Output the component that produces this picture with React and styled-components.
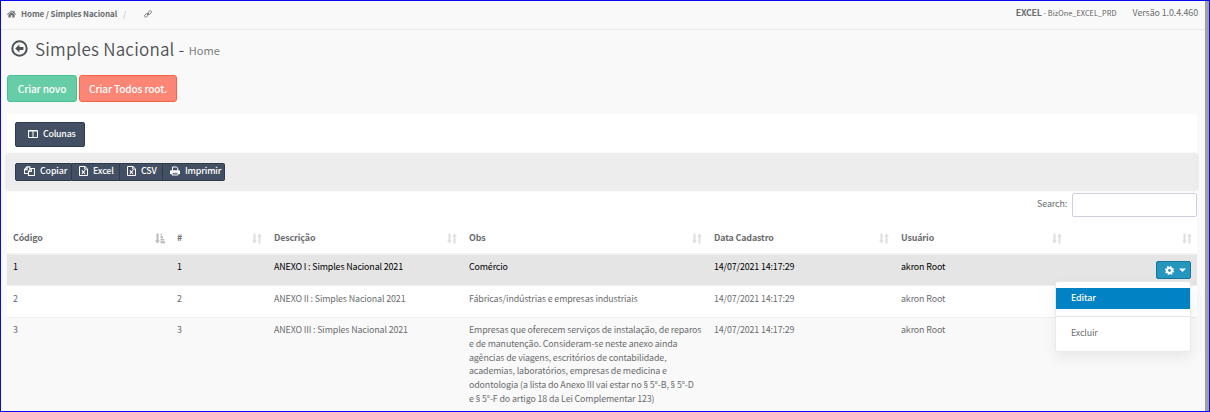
import React from 'react';
import styled, { createGlobalStyle } from 'styled-components';

const GlobalStyle = createGlobalStyle`
  * { box-sizing: border-box; }
  body {
    margin: 0;
    overflow: hidden;
    font-family: "Noto Sans CJK SC", "Noto Sans", sans-serif;
    font-size: 8.9px;
    letter-spacing: -0.13px;
    line-height: 13.75px;
    color: #6a6c6f;
  }
`;

const Page = styled.div`
  width: 1210px;
  height: 412px;
  overflow: hidden;
  border: 1px solid #0a0af0;
  background: #f9f9f9;
  display: flex;
`;
const Main = styled.div`
  flex: 1;
  min-width: 0;
  display: flex;
  flex-direction: column;
`;
const Scrollbar = styled.div`
  width: 4px;
  background: #a0a0a0;
`;
const TopBar = styled.header`
  height: 29px;
  flex: none;
  border-bottom: 1px solid #ececec;
  display: flex;
  justify-content: space-between;
  padding: 6px 7px 0 6px;
`;
const Crumbs = styled.nav`
  display: flex;
  align-items: center;
  height: 14px;
  font-size: 8px;
  letter-spacing: -0.09px;
  svg:first-child { margin-right: 5px; }
  svg:last-child { margin-left: 18px; }
`;
const Slash = styled.span`
  color: #b5b5b5;
  margin-left: 6px;
`;
const Status = styled.div`
  display: flex;
  height: 14px;
  margin-top: -1px;
  letter-spacing: -0.08px;
  white-space: nowrap;
  b { letter-spacing: -0.25px; }
  small { font-size: 7.3px; letter-spacing: 0.05px; color: #5c5e61; }
`;
const Version = styled.span`
  margin-left: 16px;
`;
const Heading = styled.h1`
  margin: 0;
  height: 45px;
  flex: none;
  display: flex;
  padding: 9px 0 0 10px;
  font-size: 17px;
  font-weight: 350;
  line-height: 20px;
  letter-spacing: 0.22px;
  white-space: nowrap;
  color: #4f5254;
  svg { margin: 1px 7px 0 0; }
  small {
    font-size: 11px;
    font-weight: 400;
    letter-spacing: 0.05px;
    color: #7b7d80;
    margin-left: 4px;
    padding-top: 1px;
  }
`;
const Actions = styled.div`
  display: flex;
  gap: 2px;
  padding-left: 6px;
  margin-bottom: 12px;
`;
const ActionButton = styled.button`
  height: 27px;
  width: ${(p) => p.$w}px;
  padding: 1px 0 0;
  border: 1px solid ${(p) => p.$border};
  border-radius: 3px;
  background: ${(p) => p.$bg};
  color: #fff;
  font: 500 10.1px/14px "Noto Sans CJK SC", sans-serif;
  letter-spacing: -0.14px;
  white-space: nowrap;
`;
const Panel = styled.section`
  width: 1190px;
  margin-left: 6px;
  background: #fff;
  flex: 1;
  padding-top: 8px;
`;
const DarkButton = styled.button`
  height: ${(p) => p.$h}px;
  width: ${(p) => p.$w}px;
  padding: 0 3px 3px 8px;
  border: 1px solid #2f3b4c;
  border-radius: ${(p) => p.$radius || '2px'};
  background: #435063;
  color: #fff;
  display: flex;
  align-items: center;
  font: 500 8.9px/12px "Noto Sans CJK SC", sans-serif;
  letter-spacing: -0.15px;
  white-space: nowrap;
  svg { margin-right: 5px; flex: none; }
  & + & { border-left: 0; padding-left: 7px; }
`;
const ColumnsRow = styled.div`
  padding-left: 8px;
  height: 32px;
  button { padding-left: 12px; padding-bottom: 1px; letter-spacing: -0.25px; }
`;
const ExportBar = styled.div`
  height: 36px;
  background: #ededed;
  box-shadow: 0 0 3px rgba(0, 0, 0, 0.18);
  display: flex;
  padding: 9px 0 0 8px;
`;
const SearchRow = styled.label`
  display: flex;
  justify-content: flex-end;
  height: 27px;
  margin-top: 3px;
  line-height: 21px;
`;
const SearchInput = styled.input`
  width: 125px;
  height: 24px;
  margin-left: 5px;
  border: 1px solid #ccd0e0;
  border-radius: 2px;
  background: #fff;
`;
const Row = styled.div`
  display: grid;
  grid-template-columns: 163px 97px 195px 245px 187px 173px 130px;
  height: ${(p) => p.$h}px;
  padding-top: ${(p) => p.$pt}px;
  background: ${(p) => p.$bg || '#fff'};
  color: ${(p) => p.$color || 'inherit'};
  border-top: ${(p) => (p.$line ? '1px solid #efefef' : '0')};
`;
const HeadRow = styled(Row)`
  border-bottom: 2px solid #f1f1f1;
  font-weight: 700;
  color: #6a6c6f;
`;
const Cell = styled.div`
  padding-left: 7px;
  white-space: pre;
  position: relative;
  &:first-child { padding-left: 6px; }
`;
const HeadCell = styled(Cell)`
  display: flex;
  justify-content: space-between;
  padding-right: 5px;
  svg { display: block; margin-top: 2px; }
`;
const ObsLine = styled.div`
  height: 13.75px;
`;
const Section = styled.span`
  font-family: "Noto Sans", sans-serif;
`;
const GearButton = styled.button`
  width: 35px;
  height: 18px;
  margin: 1px 0 0 82px;
  padding: 0 4px 0 8px;
  border: 1px solid #17779a;
  border-radius: 2px;
  background: #2596be;
  display: flex;
  align-items: center;
  justify-content: space-between;
`;
const Menu = styled.div`
  position: absolute;
  z-index: 2;
  top: 21px;
  left: -12px;
  width: 136px;
  height: 71px;
  background: #fff;
  border: 1px solid #e9e9e9;
  border-radius: 3px;
  box-shadow: 0 6px 14px rgba(0, 0, 0, 0.07);
  padding-top: 6px;
`;
const MenuItem = styled.div`
  height: 21px;
  padding: 3px 0 0 15px;
  color: ${(p) => (p.$active ? '#fff' : '#6a6c6f')};
  background: ${(p) => (p.$active ? '#0082c4' : 'transparent')};
  font-weight: ${(p) => (p.$active ? 500 : 400)};
`;
const Divider = styled.div`
  height: 1px;
  background: #e6e6e6;
  margin: 7px 0 6px;
`;

const HomeIcon = () => (
  <svg width="9" height="8" viewBox="0 0 18 16" fill="#6a6c6f">
    <path d="M9 1 0 8.6l1 1.2L9 3.2l8 6.6 1-1.2-2.8-2.4V1.6h-2.4v2.6zM9 4.5 2.9 9.6V15h4.6v-4.4h3V15h4.6V9.6z" />
  </svg>
);
const LinkIcon = () => (
  <svg width="8" height="8" viewBox="0 0 16 16" fill="none" stroke="#6a6c6f" strokeWidth="1.6">
    <rect x="7.3" y="2.8" width="8" height="5" rx="2.3" transform="rotate(-42 11.3 5.3)" />
    <rect x="0.8" y="8.2" width="8" height="5" rx="2.3" transform="rotate(-42 4.8 10.7)" />
    <path d="m6 10 4-4" />
  </svg>
);
const BackIcon = () => (
  <svg width="17" height="17" viewBox="0 0 17 17">
    <circle cx="8.5" cy="8.5" r="7.2" fill="none" stroke="#4f5254" strokeWidth="2" />
    <path d="M4.2 8.5 8.4 4.6v2.5h4v2.8h-4v2.5z" fill="#4f5254" />
  </svg>
);
const ColumnsIcon = () => (
  <svg width="10" height="8" viewBox="0 0 10 8" fill="none" stroke="#fff">
    <path d="M.5.5h9v7h-9zM5 .5v7M.5 1h9" />
  </svg>
);
const CopyIcon = () => (
  <svg width="11" height="10" viewBox="0 0 11 10" fill="none" stroke="#fff" strokeWidth="1.1">
    <path d="M4.5 7.5h-4v-4L3 .9h2.8v2M.5 3.6h2.6V.9M4.5 9.5V5.2L7 2.5h3.5v7zM4.7 5.4h2.6V2.6" />
  </svg>
);
const SheetIcon = () => (
  <svg width="9" height="10" viewBox="0 0 9 10" fill="none" stroke="#fff">
    <path d="M.5.5H6l2.5 2.4v6.6h-8zM5.7.7v2.5h2.6" />
    <path d="m2.8 4.3 3.2 3.5M6 4.3 2.8 7.8" strokeWidth="1.1" />
  </svg>
);
const PrintIcon = () => (
  <svg width="10" height="10" viewBox="0 0 10 10">
    <path d="M2.5 5V1h4l1.2 1.2V5" fill="none" stroke="#fff" />
    <path d="M1.2 4.3h7.6a1.2 1.2 0 0 1 1.2 1.2V8H8V6.6H2V8H0V5.5a1.2 1.2 0 0 1 1.2-1.2z" fill="#fff" />
    <path d="M2 6.8h6V9H2z" fill="none" stroke="#fff" />
  </svg>
);
const SortIcon = () => (
  <svg width="10" height="11" viewBox="0 0 10 11" fill="#dedede">
    <path d="M1.5.5h2v7H5L2.5 10.5 0 7.5h1.5zM6.5 10.5h2v-7H10L7.5.5 5 3.5h1.5z" />
  </svg>
);
const SortAscIcon = () => (
  <svg width="10" height="11" viewBox="0 0 10 11" fill="#b9b9b9">
    <path d="M1.5.5h2v7H5L2.5 10.5 0 7.5h1.5zM5.5.8h1.5v1.8H5.5zM5.5 3.3h2.5v1.8H5.5zM5.5 5.8H9v1.8H5.5zM5.5 8.3H10v1.9H5.5z" />
  </svg>
);
const GearIcon = () => (
  <svg width="9" height="9" viewBox="0 0 18 18">
    <circle cx="9" cy="9" r="5" fill="none" stroke="#fff" strokeWidth="4.4" />
    <circle cx="9" cy="9" r="7.5" fill="none" stroke="#fff" strokeWidth="3" strokeDasharray="3.3 2.59" />
  </svg>
);
const CaretIcon = () => (
  <svg width="7" height="4" viewBox="0 0 7 4" fill="#fff"><path d="M0 .5h7L3.5 4z" /></svg>
);

const columns = ['Código', '#', 'Descrição', 'Obs', 'Data Cadastro', 'Usuário', ''];
const obsLong = (
  <>
    <ObsLine>Empresas que oferecem serviços de instalação, de reparos</ObsLine>
    <ObsLine>e de manutenção. Consideram-se neste anexo ainda</ObsLine>
    <ObsLine>agências de viagens, escritórios de contabilidade,</ObsLine>
    <ObsLine>academias, laboratórios, empresas de medicina e</ObsLine>
    <ObsLine>
      odontologia (a lista do Anexo III vai estar no <Section>§</Section> 5°-B, <Section>§</Section> 5°-D
    </ObsLine>
    <ObsLine>
      e <Section>§</Section> 5°-F do artigo 18 da Lei Complementar 123)
    </ObsLine>
  </>
);
const rows = [
  { id: '1', name: 'ANEXO I : Simples Nacional 2021', obs: 'Comércio', h: 30, pt: 5, bg: '#e5e5e5', color: '#000', menu: true },
  { id: '2', name: 'ANEXO II : Simples Nacional 2021', obs: 'Fábricas/indústrias e empresas industriais', h: 32, pt: 6, line: true },
  { id: '3', name: 'ANEXO III : Simples Nacional 2021', obs: obsLong, h: 94, pt: 5, bg: '#f9f9f9', line: true },
];

export default function App() {
  return (
    <>
      <GlobalStyle />
      <Page>
        <Main>
          <TopBar>
            <Crumbs>
              <HomeIcon />
              <b>Home / Simples Nacional</b>
              <Slash>/</Slash>
              <LinkIcon />
            </Crumbs>
            <Status>
              <span><b>EXCEL</b> <small>- BizOne_EXCEL_PRD</small></span>
              <Version>Versão 1.0.4.460</Version>
            </Status>
          </TopBar>
          <Heading>
            <BackIcon />
            <span>Simples Nacional -</span>
            <small>Home</small>
          </Heading>
          <Actions>
            <ActionButton $w={70} $bg="#66cda6" $border="#45c090">Criar novo</ActionButton>
            <ActionButton $w={98} $bg="#fc8675" $border="#fb5f48">Criar Todos root.</ActionButton>
          </Actions>
          <Panel>
            <ColumnsRow>
              <DarkButton $w={70} $h={25}><ColumnsIcon />Colunas</DarkButton>
            </ColumnsRow>
            <ExportBar>
              <DarkButton $w={57} $h={18} $radius="2px 0 0 2px"><CopyIcon />Copiar</DarkButton>
              <DarkButton $w={48} $h={18} $radius="0"><SheetIcon />Excel</DarkButton>
              <DarkButton $w={43} $h={18} $radius="0"><SheetIcon />CSV</DarkButton>
              <DarkButton $w={62} $h={18} $radius="0 2px 2px 0"><PrintIcon />Imprimir</DarkButton>
            </ExportBar>
            <SearchRow>Search:<SearchInput /></SearchRow>
            <HeadRow $h={35} $pt={11}>
              {columns.map((c, i) => (
                <HeadCell key={i}><span>{c}</span>{i === 0 ? <SortAscIcon /> : <SortIcon />}</HeadCell>
              ))}
            </HeadRow>
            {rows.map((r) => (
              <Row key={r.id} $h={r.h} $pt={r.pt} $bg={r.bg} $color={r.color} $line={r.line}>
                <Cell>{r.id}</Cell>
                <Cell>{r.id}</Cell>
                <Cell>{r.name}</Cell>
                <Cell>{r.obs}</Cell>
                <Cell>14/07/2021 14:17:29</Cell>
                <Cell>akron Root</Cell>
                <Cell>
                  {r.menu && (
                    <>
                      <GearButton><GearIcon /><CaretIcon /></GearButton>
                      <Menu>
                        <MenuItem $active>Editar</MenuItem>
                        <Divider />
                        <MenuItem>Excluir</MenuItem>
                      </Menu>
                    </>
                  )}
                </Cell>
              </Row>
            ))}
          </Panel>
        </Main>
        <Scrollbar />
      </Page>
    </>
  );
}
